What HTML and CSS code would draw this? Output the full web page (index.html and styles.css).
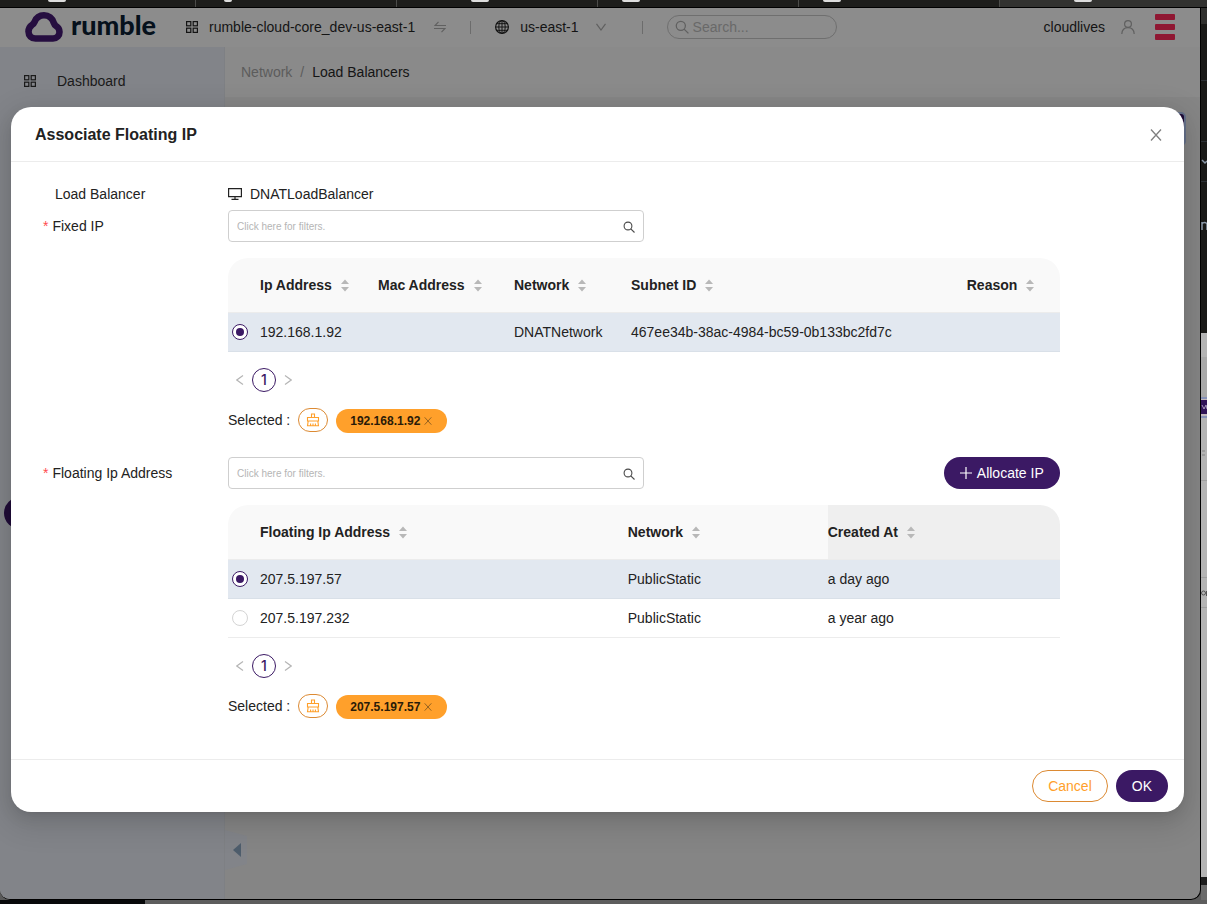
FILE: index.html
```html
<!DOCTYPE html>
<html lang="en">
<head>
<meta charset="utf-8">
<title>Associate Floating IP</title>
<link rel="stylesheet" href="styles.css">
</head>
<body>
<svg width="0" height="0" class="sprite" aria-hidden="true">
  <symbol id="grid" viewBox="0 0 12 12"><g fill="none" stroke="currentColor" stroke-width="1.200"><rect x=".6" y=".6" width="4.200" height="4.200"/><rect x="7.200" y=".6" width="4.200" height="4.200"/><rect x=".6" y="7.200" width="4.200" height="4.200"/><rect x="7.200" y="7.200" width="4.200" height="4.200"/></g></symbol>
  <symbol id="sort" viewBox="0 0 8 13"><path d="M4 0.500 8 5H0zM4 12.500 8 8H0z" fill="#b8b8b8"/></symbol>
  <symbol id="left" viewBox="0 0 8 12"><path d="M7 1.500.8 6 7 10.500" fill="none" stroke="currentColor" stroke-width="1.200"/></symbol>
  <symbol id="right" viewBox="0 0 8 12"><path d="M1 1.500 7.200 6 1 10.500" fill="none" stroke="currentColor" stroke-width="1.200"/></symbol>
  <symbol id="close" viewBox="0 0 12 12"><path d="M1 .5 11 11.500M11 .5 1 11.500" fill="none" stroke="currentColor" stroke-width="1.300"/></symbol>
  <symbol id="search" viewBox="0 0 12 12"><g fill="none" stroke="currentColor" stroke-width="1.100"><circle cx="5" cy="5" r="3.900"/><path d="m7.800 7.800 3.700 3.700"/></g></symbol>
  <symbol id="clear" viewBox="0 0 14 14"><path d="M5.500 4.500V1h3v3.500M1.500 8V4.500h11V8zM2.200 8 1.500 12.800h11L11.800 8M4.600 12.800v-2.300M7 12.800v-2.300M9.400 12.800v-2.300" fill="none" stroke="currentColor" stroke-width="1.100"/></symbol>
</svg>
<div class="desktop">
  <div class="tabs" aria-hidden="true">
    <div class="tab tab-first"><i></i></div>
    <div class="tab"><i class="dot"></i></div>
    <div class="tab tab-far"><i></i></div>
    <div class="tab"><i></i></div>
    <div class="tab"><i></i></div>
    <div class="tab tab-far tab-active"><i></i></div>
  </div>
  <div class="middle">
    <div class="app">
      <header class="topbar">
        <div class="logo">
          <svg width="38" height="30" viewBox="0 0 38 30"><path d="M10.500 26.500h17.500c4 0 6.500-3 6.500-6.400 0-3-1.200-4.800-3.400-6.100-1.100-.7-1.700-1.400-2.100-2.700C27.600 6.300 23.500 3.300 19 3.300c-4.600 0-7.800 2.500-9.500 6.600-.6 1.500-1.100 2-2.500 3-2.300 1.500-3.500 3.800-3.500 6.700 0 4 3 6.900 7 6.900z" fill="none" stroke="#260e40" stroke-width="6.600"/></svg>
          <span>rumble</span>
        </div>
        <div class="project">
          <svg width="12" height="12"><use href="#grid"/></svg>
          <span>rumble-cloud-core_dev-us-east-1</span>
          <svg class="faint" width="12" height="12" viewBox="0 0 12 12"><path d="M12 4.500H1L4.500.8M0 7.500h11L7.500 11.200" fill="none" stroke="currentColor" stroke-width="1.200"/></svg>
        </div>
        <i class="rule"></i>
        <div class="region">
          <svg width="14" height="14" viewBox="0 0 14 14"><g fill="none" stroke="currentColor"><circle cx="7" cy="7" r="6.400" stroke-width="1.200"/><ellipse cx="7" cy="7" rx="3.200" ry="6.400"/><path d="M7 .5v13M.5 7h13M1.500 3.700h11M1.500 10.300h11"/></g></svg>
          <span>us-east-1</span>
          <svg class="faint" width="10" height="8" viewBox="0 0 10 8"><path d="M.5.8 5 7 9.500.8" fill="none" stroke="currentColor" stroke-width="1.200"/></svg>
        </div>
        <i class="rule"></i>
        <label class="search"><svg width="14" height="14"><use href="#search"/></svg><input type="text" placeholder="Search..." aria-label="Search"></label>
        <div class="account">
          <span>cloudlives</span>
          <svg class="faint" width="14" height="14" viewBox="0 0 14 14"><g fill="none" stroke="currentColor" stroke-width="1.200"><circle cx="7" cy="4" r="3.400"/><path d="M.8 14c.2-3.800 2.700-6.300 6.200-6.300s6 2.500 6.200 6.300"/></g></svg>
          <div class="bars"><i></i><i></i><i></i></div>
        </div>
      </header>
      <div class="page">
        <nav class="sidebar">
          <a href="#"><svg width="12" height="12"><use href="#grid"/></svg>Dashboard</a>
          <button class="collapse" aria-label="Collapse menu"><svg width="22" height="40" viewBox="0 0 22 40"><path d="M0 0 22 6v28L0 40z" fill="#828489"/><path d="M16 13v14l-8-7z" fill="#4e5d6c"/></svg></button>
          <i class="bubble"></i>
        </nav>
        <main>
          <div class="crumbs"><a href="#">Network</a><span>/</span><b>Load Balancers</b></div>
          <i class="peek"></i>
        </main>
      </div>

      <section class="modal" role="dialog" aria-labelledby="title">
        <header class="modal-head">
          <h1 id="title">Associate Floating IP</h1>
          <button class="x" aria-label="Close"><svg width="12" height="12"><use href="#close"/></svg></button>
        </header>
        <form class="form">
          <div class="row">
            <span class="label plain">Load Balancer</span>
            <div class="static"><svg width="14" height="12" viewBox="0 0 14 12"><path d="M.6.600h12.800v8H.6zM7 8.600v2.800M3.500 11.400h7" fill="none" stroke="currentColor" stroke-width="1.200"/></svg>DNATLoadBalancer</div>
          </div>
          <div class="row">
            <label class="label" for="fixed"><em>*</em>Fixed IP</label>
            <div class="field">
              <div class="tools"><div class="filter"><input id="fixed" type="text" placeholder="Click here for filters."><svg width="12" height="12"><use href="#search"/></svg></div></div>
              <table>
                <colgroup><col class="c-radio"><col class="c-ip"><col class="c-mac"><col class="c-net"><col><col class="c-reason"></colgroup>
                <thead><tr><th></th><th>Ip Address<svg width="8" height="13"><use href="#sort"/></svg></th><th>Mac Address<svg width="8" height="13"><use href="#sort"/></svg></th><th>Network<svg width="8" height="13"><use href="#sort"/></svg></th><th>Subnet ID<svg width="8" height="13"><use href="#sort"/></svg></th><th>Reason<svg width="8" height="13"><use href="#sort"/></svg></th></tr></thead>
                <tbody><tr class="on"><td><input type="radio" name="fixed" aria-label="192.168.1.92" checked></td><td>192.168.1.92</td><td></td><td>DNATNetwork</td><td>467ee34b-38ac-4984-bc59-0b133bc2fd7c</td><td></td></tr></tbody>
              </table>
              <div class="pager"><button type="button" aria-label="Previous"><svg width="8" height="12"><use href="#left"/></svg></button><button type="button" class="current">1</button><button type="button" aria-label="Next"><svg width="8" height="12"><use href="#right"/></svg></button></div>
              <div class="selected"><span>Selected :</span><button type="button" class="clear" aria-label="Clear selection"><svg width="14" height="14"><use href="#clear"/></svg></button><span class="tag">192.168.1.92<button type="button" aria-label="Remove"><svg width="8" height="8"><use href="#close"/></svg></button></span></div>
            </div>
          </div>
          <div class="row second">
            <label class="label" for="floating"><em>*</em>Floating Ip Address</label>
            <div class="field">
              <div class="tools"><div class="filter"><input id="floating" type="text" placeholder="Click here for filters."><svg width="12" height="12"><use href="#search"/></svg></div><button type="button" class="btn primary"><svg width="12" height="12" viewBox="0 0 12 12"><path d="M6 0v12M0 6h12" stroke="currentColor" stroke-width="1.200"/></svg>Allocate IP</button></div>
              <table>
                <colgroup><col class="c-radio"><col><col class="c-fnet"><col class="c-created"></colgroup>
                <thead><tr><th></th><th>Floating Ip Address<svg width="8" height="13"><use href="#sort"/></svg></th><th>Network<svg width="8" height="13"><use href="#sort"/></svg></th><th class="hover">Created At<svg width="8" height="13"><use href="#sort"/></svg></th></tr></thead>
                <tbody>
                  <tr class="on"><td><input type="radio" name="float" aria-label="207.5.197.57" checked></td><td>207.5.197.57</td><td>PublicStatic</td><td>a day ago</td></tr>
                  <tr><td><input type="radio" name="float" aria-label="207.5.197.232"></td><td>207.5.197.232</td><td>PublicStatic</td><td>a year ago</td></tr>
                </tbody>
              </table>
              <div class="pager"><button type="button" aria-label="Previous"><svg width="8" height="12"><use href="#left"/></svg></button><button type="button" class="current">1</button><button type="button" aria-label="Next"><svg width="8" height="12"><use href="#right"/></svg></button></div>
              <div class="selected"><span>Selected :</span><button type="button" class="clear" aria-label="Clear selection"><svg width="14" height="14"><use href="#clear"/></svg></button><span class="tag">207.5.197.57<button type="button" aria-label="Remove"><svg width="8" height="8"><use href="#close"/></svg></button></span></div>
            </div>
          </div>
        </form>
        <footer class="modal-foot"><button class="btn outline">Cancel</button><button class="btn primary ok">OK</button></footer>
      </section>
    </div>
    <div class="behind" aria-hidden="true">
      <svg width="6" height="892" viewBox="0 8 6 892">
        <path fill="#191917" d="M0 8h6v325H0z"/><path fill="#30302e" d="M0 8h6v16H0z"/>
        <path stroke="#2c3035" d="M0 80.500h6M0 141.500h6M0 181.500h6"/>
        <path d="m1 160 3 3 2-2M1 230v-8M1 224c1-2 4-2 5 0v6" fill="none" stroke="#8a98a8" stroke-width="1.500"/>
        <path fill="#b4b4b4" d="M0 333h6v544H0z"/><path fill="#a9a9a9" d="M0 357h6v40H0z"/>
        <path fill="#8792b8" d="M0 397h6v21H0z"/><path fill="#c2b8bd" d="M0 399h6v17H0z"/><path fill="#301457" d="M0 400h6v14H0z"/>
        <path d="m1 405 2 4 2-4 1 4" fill="none" stroke="#a99bbd"/>
        <path stroke="#a0a0a0" d="M0 480.500h6M0 577.500h6M0 607.500h6"/>
        <path d="M1 451h3M1 455h3" stroke="#858585"/>
        <circle cx="2.500" cy="593" r="2" fill="none" stroke="#555"/><path d="M5.500 596v-5" stroke="#555"/>
        <path fill="#1c1c1c" d="M0 877h6v8H0z"/><path fill="#6b6b6b" d="M0 885h6v15H0z"/>
      </svg>
    </div>
  </div>
  <div class="bottom" aria-hidden="true"></div>
</div>
</body>
</html>
```

FILE: styles.css
```css
* { box-sizing: border-box; }
body { margin: 0; font: 14px/20px "Liberation Sans", Arial, sans-serif; color: #222; background: #666; }
button, input { font: inherit; color: inherit; margin: 0; padding: 0; border: 0; background: none; }
a { color: inherit; text-decoration: none; }
svg { flex: none; display: block; }
.sprite { position: absolute; }
.desktop { min-height: 100vh; display: flex; flex-direction: column; overflow: hidden; }

.tabs { height: 8px; display: flex; background: #1d1d1b; border-bottom: 1px solid #000; overflow: hidden; }
.tab { flex: 0 0 201px; padding-left: 24px; border-left: 1px solid #4b4b49; }
.tab-first { flex-basis: 195px; padding-left: 48px; border: 0; }
.tab-far { padding-left: 74px; }
.tab-active { flex: 1 0 201px; background: #323230; }
.tab i { display: block; width: 18px; height: 2px; background: #ddd; border-radius: 0 0 4px 4px; }
.tab .dot { width: 8px; margin-left: 4px; }

.middle { flex: 1; display: flex; background: #5a5a5a; }
.app { flex: 1; position: relative; display: flex; flex-direction: column; background: #858585; border-right: 1px solid #000; border-bottom: 1px solid #000; border-radius: 0 0 10px 10px; overflow: hidden; }
.behind { width: 6px; }
.bottom { height: 4px; background: linear-gradient(90deg, #08090a 145px, #5d5d5d 145px); }

.topbar { height: 39px; display: flex; align-items: center; padding: 0 25px 1px; background: #8c8c8c; color: #141414; box-shadow: 0 2px 8px rgba(0,0,0,.12); position: relative; }
.faint { color: #606060; }
.logo { width: 161px; display: flex; align-items: center; gap: 8px; }
.logo span { font: 900 27px/26px Lato, sans-serif; color: #06111c; padding-bottom: 4px; }
.project { display: flex; align-items: center; gap: 11px; }
.rule { width: 1px; height: 13px; background: #6c6c6c; margin: 0 24px; }
.project .faint { margin-left: 8px; }
.region { display: flex; align-items: center; gap: 11px; }
.region .faint { margin: 0 12px 0 6px; }
.search { width: 170px; height: 24px; display: flex; align-items: center; gap: 4px; padding: 0 7px; border: 1px solid #6f6f6f; border-radius: 12px; color: #606060; }
.search input { flex: 1; min-width: 0; }
.search input::placeholder { color: #696969; opacity: 1; }
.account { margin-left: auto; display: flex; align-items: center; gap: 16px; }
.bars { width: 20px; display: grid; gap: 4px; margin-left: 4px; }
.bars i { height: 6px; background: #8f1732; border-radius: 1px; }

.page { flex: 1; display: flex; }
.sidebar { width: 225px; position: relative; background: #828489; border-right: 1px solid #7e8084; padding: 24px; color: #1a1a1a; }
.sidebar a { display: flex; align-items: center; gap: 21px; }
.collapse { position: absolute; left: 225px; bottom: 29px; }
.bubble { position: absolute; left: 4px; top: 450px; width: 32px; height: 32px; border-radius: 50%; background: #200c38; }
main { flex: 1; position: relative; }
.crumbs { height: 50px; display: flex; align-items: center; gap: 8px; padding: 0 16px; background: #8a8a8a; color: #5c5c5c; }
.crumbs b { font-weight: normal; color: #141414; }
.peek { position: absolute; right: 14px; top: 65px; width: 40px; height: 34px; border: 2px solid #66728c; border-radius: 5px; background: #200c38; }

.modal { position: absolute; left: 11px; right: 16px; top: 99px; background: #fff; border-radius: 20px; box-shadow: 0 3px 6px -4px rgba(0,0,0,.12), 0 6px 16px rgba(0,0,0,.08), 0 9px 28px 8px rgba(0,0,0,.1); }
.modal-head { height: 55px; display: flex; align-items: center; justify-content: space-between; padding: 1px 22px 0 24px; border-bottom: 1px solid #ececec; }
.modal-head h1 { margin: 0; font-size: 16px; line-height: 24px; }
.x { color: #808080; }
.form { padding: 16px 32px 40px; }
.row { display: grid; grid-template-columns: 185px 75%; }
.second { margin-top: 24px; }
.label { line-height: 32px; }
.plain { padding-left: 12px; }
.label em { font-style: normal; color: #ff4d4f; margin-right: 4px; }
.static { display: flex; align-items: center; gap: 8px; }
.tools { display: flex; justify-content: space-between; margin-bottom: 16px; }
.filter { width: 50%; height: 32px; display: flex; align-items: center; padding: 1px 8px 0; border: 1px solid #cfcfcf; border-radius: 4px; }
.filter input { flex: 1; min-width: 0; font-size: 10px; }
.filter input::placeholder { color: #b5b5b5; opacity: 1; }
.filter svg { color: #4a4a4a; }

table { width: 100%; table-layout: fixed; border-collapse: separate; border-spacing: 0; }
th, td { padding: 0; text-align: left; white-space: nowrap; border-bottom: 1px solid #ececec; }
th { height: 55px; background: #f9f9f9; }
th:first-child { border-top-left-radius: 20px; }
th:last-child { border-top-right-radius: 20px; }
th svg { display: inline-block; vertical-align: middle; margin: 0 0 1px 9px; }
th.hover { background: #efefef; }
td { height: 39px; }
.on td { background: #e2e8f0; border-color: #d9e0e8; }
.c-radio { width: 32px; }
.c-ip { width: 118px; }
.c-mac { width: 136px; }
.c-net { width: 117px; }
.c-reason { width: 93px; }
.c-fnet { width: 200px; }
.c-created { width: 232px; }
input[type="radio"] { appearance: none; display: grid; place-items: center; width: 16px; height: 16px; margin-left: 4px; border: 1px solid #d4d4d4; border-radius: 50%; background: #fff; }
input[type="radio"]:checked { border-color: #3b1964; }
input[type="radio"]:checked::before { content: ""; width: 8px; height: 8px; border-radius: 50%; background: #3b1964; }

.pager { height: 24px; margin-top: 16px; padding-left: 8px; display: flex; align-items: center; gap: 8px; color: #b5b5b5; }
.pager .current { width: 24px; height: 24px; border: 1px solid #3b1964; border-radius: 50%; color: #3b1964; font: 500 14px/20px Inter, sans-serif; }
.selected { height: 25px; margin-top: 16px; display: flex; align-items: flex-start; gap: 8px; line-height: 24px; }
.clear { width: 30px; height: 24px; display: grid; place-items: center; border: 1px solid #dc8a33; border-radius: 12px; color: #ffa02b; }
.tag { align-self: flex-end; height: 24px; display: flex; align-items: center; gap: 4px; padding: 0 15px 0 14px; border-radius: 12px; background: #ffa02b; color: #2a1b08; font-size: 12px; font-weight: bold; }
.tag button { color: #85591f; }

.btn { height: 32px; padding: 0 16px; border-radius: 16px; display: flex; align-items: center; gap: 5px; }
.primary { background: #3b1964; color: #fff; }
.outline { border: 1px solid #dc8a33; color: #ffa02b; padding: 0 15px; }
.modal-foot { display: flex; justify-content: flex-end; gap: 8px; padding: 10px 16px; border-top: 1px solid #ececec; }
```
